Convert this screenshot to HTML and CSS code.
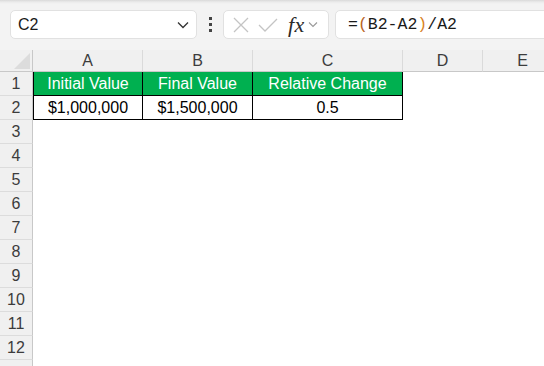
FILE: index.html
```html
<!DOCTYPE html>
<html>
<head>
<meta charset="utf-8">
<link rel="stylesheet" href="styles.css">
</head>
<body>
<div class="app">
  <div class="toolbar">
    <div class="namebox">
      <span class="name">C2</span>
      <svg class="chev" width="12" height="8" viewBox="0 0 12 8"><path d="M1 1.5 L6 6.5 L11 1.5" fill="none" stroke="#333" stroke-width="1.3"/></svg>
    </div>
    <div class="dots"><span></span><span></span><span></span></div>
    <div class="fnbox">
      <svg class="ic" width="18" height="18" viewBox="0 0 18 18"><path d="M2 2 L16 16 M16 2 L2 16" stroke="#c4c4c4" stroke-width="1.3" fill="none"/></svg>
      <svg class="ic" width="20" height="18" viewBox="0 0 20 18"><path d="M1 9 L7 15 L19 3" stroke="#c4c4c4" stroke-width="1.3" fill="none"/></svg>
      <span class="fx">fx</span>
      <svg class="chev2" width="10" height="7" viewBox="0 0 10 7"><path d="M1 1.5 L5 5.5 L9 1.5" fill="none" stroke="#999" stroke-width="1.1"/></svg>
    </div>
    <div class="formula">=<span class="p1">(</span>B2-A2<span class="p2">)</span>/A2</div>
  </div>
  <div class="grid">
    <div class="corner"><svg width="20" height="16" viewBox="0 0 20 16"><path d="M18 0 L18 16 L2 16 Z" fill="#dcdcdc"/></svg></div>
    <div class="ch">A</div><div class="ch">B</div><div class="ch">C</div><div class="ch">D</div><div class="ch">E</div>

    <div class="rh">1</div>
    <div class="c hd first">Initial Value</div><div class="c hd">Final Value</div><div class="c hd">Relative Change</div><div class="c"></div><div class="c"></div>

    <div class="rh">2</div>
    <div class="c tb first">$1,000,000</div><div class="c tb">$1,500,000</div><div class="c tb">0.5</div><div class="c"></div><div class="c"></div>

    <div class="rh">3</div><div class="c"></div><div class="c"></div><div class="c"></div><div class="c"></div><div class="c"></div>
    <div class="rh">4</div><div class="c"></div><div class="c"></div><div class="c"></div><div class="c"></div><div class="c"></div>
    <div class="rh">5</div><div class="c"></div><div class="c"></div><div class="c"></div><div class="c"></div><div class="c"></div>
    <div class="rh">6</div><div class="c"></div><div class="c"></div><div class="c"></div><div class="c"></div><div class="c"></div>
    <div class="rh">7</div><div class="c"></div><div class="c"></div><div class="c"></div><div class="c"></div><div class="c"></div>
    <div class="rh">8</div><div class="c"></div><div class="c"></div><div class="c"></div><div class="c"></div><div class="c"></div>
    <div class="rh">9</div><div class="c"></div><div class="c"></div><div class="c"></div><div class="c"></div><div class="c"></div>
    <div class="rh">10</div><div class="c"></div><div class="c"></div><div class="c"></div><div class="c"></div><div class="c"></div>
    <div class="rh">11</div><div class="c"></div><div class="c"></div><div class="c"></div><div class="c"></div><div class="c"></div>
    <div class="rh">12</div><div class="c"></div><div class="c"></div><div class="c"></div><div class="c"></div><div class="c"></div>
    <div class="rh"></div><div class="c"></div><div class="c"></div><div class="c"></div><div class="c"></div><div class="c"></div>
  </div>
</div>
</body>
</html>
```

FILE: styles.css
```css
* { box-sizing: border-box; }
html, body { margin: 0; padding: 0; }
body {
  width: 544px;
  height: 366px;
  overflow: hidden;
  background: #fff;
  font-family: "Liberation Sans", Arial, sans-serif;
}
.app { width: 544px; height: 366px; overflow: hidden; }
.toolbar {
  height: 50px;
  display: flex;
  align-items: flex-start;
  padding: 10px 0 0 10px;
  background: linear-gradient(#d9d9d9 0px, #ebebeb 2px, #f3f3f3 4px, #f3f3f3 100%);
  white-space: nowrap;
}
.namebox {
  width: 187px;
  height: 29px;
  background: #fff;
  border: 1px solid #e1e1e1;
  border-radius: 5px;
  display: flex;
  align-items: center;
  padding: 0 7px 0 7px;
  flex-shrink: 0;
}
.name { font-size: 16px; color: #1a1a1a; flex: 1; }
.chev { display: block; }
.dots {
  width: 26px;
  height: 29px;
  display: flex;
  flex-direction: column;
  align-items: center;
  justify-content: center;
  gap: 3px;
  flex-shrink: 0;
}
.dots span { width: 3px; height: 3px; background: #444; display: block; }
.fnbox {
  width: 106px;
  height: 29px;
  background: #fff;
  border: 1px solid #e1e1e1;
  border-radius: 5px;
  display: flex;
  align-items: center;
  padding-left: 8px;
  flex-shrink: 0;
}
.ic { display: block; margin-right: 8px; }
.fx {
  font-family: "Liberation Serif", "Times New Roman", serif;
  font-style: italic;
  font-size: 22px;
  line-height: 22px;
  color: #2a2a2a;
  margin-left: 2px;
  margin-right: 3px;
  letter-spacing: 0.5px;
}
.chev2 { display: block; }
.formula {
  margin-left: 6px;
  width: 240px;
  height: 29px;
  background: #fff;
  border: 1px solid #e1e1e1;
  border-radius: 5px;
  padding-left: 12px;
  display: flex;
  align-items: center;
  font-family: "Liberation Mono", "DejaVu Sans Mono", monospace;
  font-size: 16.5px;
  color: #1a1a1a;
  flex-shrink: 0;
}
.p1 { color: #b8641c; }
.p2 { color: #d9821e; }

.grid {
  display: grid;
  grid-template-columns: 33px 110px 110px 150px 80px 80px;
  grid-template-rows: 22px repeat(13, 24px);
  font-size: 16px;
}
.corner {
  background: #f0f0f0;
  border-right: 1px solid #c8c8c8;
  border-bottom: 1px solid #c8c8c8;
  display: flex;
  align-items: flex-end;
  justify-content: flex-end;
  padding: 0 0 2px 0;
}
.corner svg { display: block; }
.ch {
  background: #f0f0f0;
  border-right: 1px solid #dadada;
  border-bottom: 1px solid #c8c8c8;
  color: #3c3c3c;
  font-size: 16px;
  display: flex;
  align-items: center;
  justify-content: center;
  padding-top: 1px;
}
.rh {
  background: #f0f0f0;
  border-right: 1px solid #c8c8c8;
  border-bottom: 1px solid #dcdcdc;
  color: #3c3c3c;
  font-size: 16px;
  display: flex;
  align-items: center;
  justify-content: center;
}
.c {
  background: #fff;
  display: flex;
  align-items: center;
  justify-content: center;
  color: #000;
  white-space: nowrap;
}
.hd {
  background: #00b050;
  color: #fff;
  border-right: 1px solid #000;
  border-bottom: 1px solid #000;
}
.tb {
  border-right: 1px solid #000;
  border-bottom: 1px solid #000;
}
.tb.first { border-left: 1px solid #000; }
.hd.first { border-left: 1px solid #000; }
```
